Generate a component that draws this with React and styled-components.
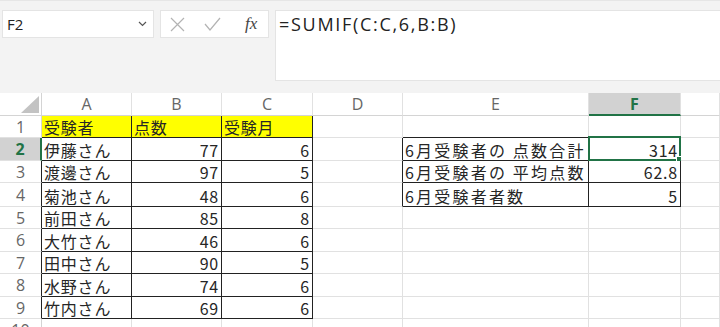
import React from 'react';
import styled, { createGlobalStyle } from 'styled-components';

const GlobalStyle = createGlobalStyle`
  html, body {
    margin: 0;
    padding: 0;
    background: #f3f3f3;
    overflow: hidden;
  }
`;

const Page = styled.div`
  width: 720px;
  height: 327px;
  overflow: hidden;
  background: #f3f3f3;
  border-top: 1px solid #e6e6e6;
  box-sizing: border-box;
`;

const FormulaRow = styled.div`
  display: flex;
  align-items: flex-start;
  padding: 9px 0 0 2px;
  height: 92px;
  box-sizing: border-box;
`;

const NameBox = styled.div`
  width: 152px;
  height: 28px;
  background: #fff;
  border: 1px solid #e4e4e4;
  box-sizing: border-box;
  display: flex;
  align-items: center;
  justify-content: space-between;
  padding: 0 6px 0 4px;
  font-family: 'Open Sans', 'Liberation Sans', sans-serif;
  font-size: 15px;
  color: #222;
`;

const ButtonBox = styled.div`
  width: 109px;
  height: 28px;
  margin-left: 6px;
  background: #fff;
  border: 1px solid #e4e4e4;
  box-sizing: border-box;
  display: flex;
  align-items: center;
  padding: 0 0 0 9px;
  gap: 19px;
`;

const Fx = styled.span`
  font-family: 'Liberation Serif', serif;
  font-style: italic;
  font-size: 17px;
  color: #444;
  margin-left: 5px;
`;

const FormulaBar = styled.div`
  flex: 1;
  height: 71px;
  margin-left: 6px;
  background: #fff;
  border: 1px solid #e4e4e4;
  border-right: none;
  box-sizing: border-box;
  padding: 1px 3px;
  font-family: 'Open Sans', 'Liberation Sans', sans-serif;
  font-size: 18px;
  letter-spacing: 1.7px;
  color: #222;
`;

const Sheet = styled.div`
  display: grid;
  grid-template-columns: 42px 90px 90px 91px 90px 186px 92px 1fr;
  grid-template-rows: 23px 22px 23px 22px 24px 22px 23px 22px 23px 22px 23px;
  background: #fff;
`;

const Cell = styled.div`
  position: relative;
  box-sizing: border-box;
  border-right: 1px solid ${p => p.$right || '#e1e1e1'};
  border-bottom: 1px solid ${p => p.$bottom || '#e1e1e1'};
  background: ${p => p.$bg || '#fff'};
  display: flex;
  align-items: flex-end;
  justify-content: ${p => (p.$num ? 'flex-end' : 'flex-start')};
  padding: 0 2px 0 2px;
  font-family: 'Noto Sans CJK JP', 'Noto Sans', sans-serif;
  font-size: 16px;
  line-height: 20px;
  letter-spacing: ${p => p.$spacing || '0.8px'};
  color: #262626;
  white-space: nowrap;
`;

const HeadCell = styled.div`
  box-sizing: border-box;
  border-right: 1px solid #e1e1e1;
  border-bottom: ${p => (p.$active ? '2px solid #217346' : '1px solid #d4d4d4')};
  background: ${p => (p.$active ? '#d2d2d2' : '#fff')};
  display: flex;
  align-items: center;
  justify-content: center;
  font-family: 'Open Sans', 'Liberation Sans', sans-serif;
  font-size: 16px;
  font-weight: ${p => (p.$active ? 700 : 400)};
  color: ${p => (p.$active ? '#217346' : '#666')};
`;

const RowHead = styled.div`
  box-sizing: border-box;
  border-right: ${p => (p.$active ? '2px solid #217346' : `1px solid ${p.$right || '#d4d4d4'}`)};
  border-bottom: 1px solid #e1e1e1;
  background: ${p => (p.$active ? '#d2d2d2' : '#fff')};
  display: flex;
  align-items: center;
  justify-content: center;
  font-family: 'Open Sans', 'Liberation Sans', sans-serif;
  font-size: 16px;
  font-weight: ${p => (p.$active ? 700 : 400)};
  color: ${p => (p.$active ? '#217346' : '#666')};
  overflow: hidden;
`;

const Corner = styled.div`
  box-sizing: border-box;
  border-right: 1px solid #d4d4d4;
  border-bottom: 1px solid #d4d4d4;
  background: #fff;
  display: flex;
  align-items: flex-end;
  justify-content: flex-end;
  padding: 0 2px 2px 0;
`;

const Selection = styled.div`
  position: absolute;
  top: -2px;
  left: -1px;
  right: -1px;
  bottom: -1px;
  border: 2px solid #217346;
  pointer-events: none;

  &::after {
    content: '';
    position: absolute;
    right: -4px;
    bottom: -4px;
    width: 5px;
    height: 5px;
    background: #217346;
    border: 1px solid #fff;
  }
`;

const cols = ['A', 'B', 'C', 'D', 'E', 'F', 'G'];
const visibleLetter = c => (c === 'G' ? '' : c);

const grid = {
  1: ['受験者', '点数', '受験月'],
  2: ['伊藤さん', '77', '6', '', '6月受験者の 点数合計', '314'],
  3: ['渡邊さん', '97', '5', '', '6月受験者の 平均点数', '62.8'],
  4: ['菊池さん', '48', '6', '', '6月受験者者数', '5'],
  5: ['前田さん', '85', '8'],
  6: ['大竹さん', '46', '6'],
  7: ['田中さん', '90', '5'],
  8: ['水野さん', '74', '6'],
  9: ['竹内さん', '69', '6'],
  10: []
};

const boxed = (r, c) =>
  (r >= 1 && r <= 9 && c >= 1 && c <= 3) || (r >= 2 && r <= 4 && c >= 5 && c <= 6);

const isNum = v => /^[0-9.]+$/.test(v);

const App = () => (
  <Page>
    <GlobalStyle />
    <FormulaRow>
      <NameBox>
        <span>F2</span>
        <svg width="9" height="6" viewBox="0 0 9 6">
          <path d="M1 1l3.5 3.5L8 1" fill="none" stroke="#555" strokeWidth="1.2" />
        </svg>
      </NameBox>
      <ButtonBox>
        <svg width="15" height="15" viewBox="0 0 15 15">
          <path d="M1 1l13 13M14 1L1 14" stroke="#b3b3b3" strokeWidth="1.2" fill="none" />
        </svg>
        <svg width="17" height="14" viewBox="0 0 17 14">
          <path d="M1 7l5 6L16 1" stroke="#b3b3b3" strokeWidth="1.2" fill="none" />
        </svg>
        <Fx>fx</Fx>
      </ButtonBox>
      <FormulaBar>=SUMIF(C:C,6,B:B)</FormulaBar>
    </FormulaRow>
    <Sheet>
      <Corner>
        <svg width="18" height="17" viewBox="0 0 18 17">
          <path d="M18 0V17H0Z" fill="#c3c3c3" />
        </svg>
      </Corner>
      {cols.map(c => (
        <HeadCell key={c} $active={c === 'F'}>
          {visibleLetter(c)}
        </HeadCell>
      ))}
      {Array.from({ length: 10 }, (_, i) => i + 1).map(r => (
        <React.Fragment key={r}>
          <RowHead
            $active={r === 2}
            $right={boxed(r, 1) && r !== 1 ? '#222' : undefined}
          >
            {r}
          </RowHead>
          {cols.map((c, ci) => {
            const col = ci + 1;
            const v = (grid[r] && grid[r][ci]) || '';
            const right = boxed(r, col) || boxed(r, col + 1) ? '#222' : undefined;
            const bottom = boxed(r, col) || boxed(r + 1, col) ? '#222' : undefined;
            return (
              <Cell
                key={c}
                $right={right}
                $bottom={bottom}
                $bg={r === 1 && col <= 3 ? '#ffff00' : undefined}
                $num={isNum(v)}
                $spacing={col === 5 ? '2.2px' : undefined}
              >
                {v}
                {r === 2 && c === 'F' && <Selection />}
              </Cell>
            );
          })}
        </React.Fragment>
      ))}
    </Sheet>
  </Page>
);

export default App;
